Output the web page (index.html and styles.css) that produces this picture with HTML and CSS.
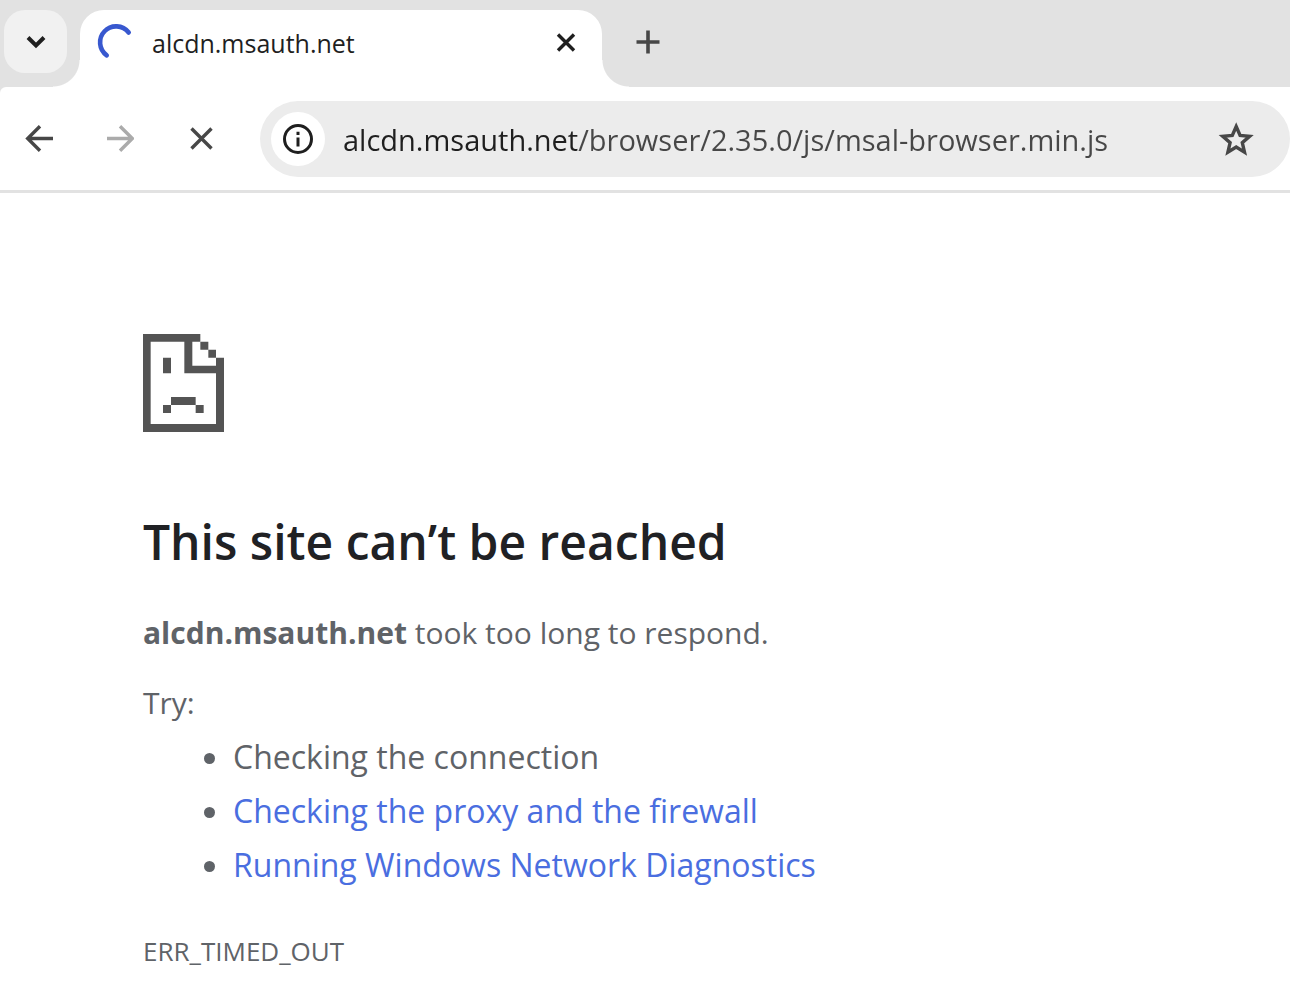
FILE: index.html
```html
<!DOCTYPE html>
<html lang="en">
  <head>
    <meta charset="UTF-8" />
    <meta name="viewport" content="width=device-width, initial-scale=1.0" />
    <title>alcdn.msauth.net</title>

    <link rel="stylesheet" href="styles.css">
  </head>
  <body>
    <header class="browser">
      <div class="tab-strip">
        <button class="tab-search" type="button" aria-label="Search tabs">
          <svg width="20" height="14" viewBox="0 0 20 14">
            <path d="M2 2.5 L10 10.5 L18 2.5" fill="none" stroke="#1f1f1f" stroke-width="4" />
          </svg>
        </button>
        <div class="tab">
          <svg class="spinner" width="36" height="36" viewBox="0 0 36 36">
            <path d="M32.7 7.5 A16 16 0 1 0 10.7 30.3" fill="none" stroke="#3858cf" stroke-width="4.6" stroke-linecap="round" />
          </svg>
          <span class="tab-title">alcdn.msauth.net</span>
          <button class="tab-close" type="button" aria-label="Close tab">
            <svg width="20" height="20" viewBox="0 0 20 20">
              <path d="M2 1.5 L18 17.5 M18 1.5 L2 17.5" stroke="#1f1f1f" stroke-width="3.4" />
            </svg>
          </button>
        </div>
        <button class="new-tab" type="button" aria-label="New tab">
          <svg width="24" height="24" viewBox="0 0 24 24">
            <path d="M12 .5 V23.5 M.5 12 H23.5" stroke="#474747" stroke-width="3.6" />
          </svg>
        </button>
      </div>

      <div class="toolbar">
        <nav class="nav-buttons">
          <button type="button" aria-label="Back">
            <svg width="28" height="28" viewBox="0 0 28 28">
              <path d="M28 13.5 H3 M15 1.2 L2.7 13.5 L15 25.8" fill="none" stroke="#474747" stroke-width="3.4" />
            </svg>
          </button>
          <button type="button" aria-label="Forward" disabled>
            <svg width="28" height="28" viewBox="0 0 28 28">
              <path d="M1 13.5 H26 M14 1.2 L26.3 13.5 L14 25.8" fill="none" stroke="#ababab" stroke-width="3.4" />
            </svg>
          </button>
          <button type="button" aria-label="Stop loading">
            <svg width="28" height="28" viewBox="0 0 28 28">
              <path d="M4.5 3.5 L24.5 23.5 M24.5 3.5 L4.5 23.5" stroke="#474747" stroke-width="3.4" />
            </svg>
          </button>
        </nav>
        <div class="omnibox">
          <button class="site-info" type="button" aria-label="View site information">
            <svg width="32" height="32" viewBox="0 0 32 32">
              <circle cx="16" cy="16" r="13.5" fill="none" stroke="#1f1f1f" stroke-width="3" />
              <path d="M16 14.5 V23.5 M16 8.8 V12" stroke="#1f1f1f" stroke-width="3" />
            </svg>
          </button>
          <input class="url" type="text" aria-label="Address" value="alcdn.msauth.net/browser/2.35.0/js/msal-browser.min.js" />
          <button class="bookmark" type="button" aria-label="Bookmark this page">
            <svg width="36" height="36" viewBox="0 0 36 36">
              <path d="M18.2 5.5 L22.1 14.5 L31.6 15.3 L24.3 21.6 L26.5 31.1 L18.2 26 L9.9 31.1 L12.1 21.6 L4.8 15.3 L14.3 14.5 Z" fill="none" stroke="#474747" stroke-width="3.4" />
            </svg>
          </button>
        </div>
      </div>
    </header>

    <main class="error-page">
      <svg class="sad-page" width="81" height="98" viewBox="0 0 243 294" fill="#545454">
        <!-- outline -->
        <path d="M0 0 H172 V23 H148 V95 H219 V71 H243 V294 H0 Z M23 23 V270 H219 V118 H124 V23 Z" fill-rule="evenodd" />
        <!-- folded corner -->
        <path d="M172 23 H196 V47 H172 Z M196 47 H219 V71 H196 Z" />
        <!-- face -->
        <path d="M60 71 H84 V118 H60 Z M84 189 H158 V213 H84 Z M60 213 H84 V237 H60 Z M158 213 H182 V237 H158 Z" />
      </svg>
      <h1>This site can’t be reached</h1>
      <p class="summary"><strong>alcdn.msauth.net</strong> took too long to respond.</p>
      <p class="try">Try:</p>
      <ul class="suggestions">
        <li>Checking the connection</li>
        <li><a href="#proxy">Checking the proxy and the firewall</a></li>
        <li><a href="#diagnostics">Running Windows Network Diagnostics</a></li>
      </ul>
      <p class="error-code">ERR_TIMED_OUT</p>
    </main>
  </body>
</html>
```

FILE: styles.css
```css
* {
  box-sizing: border-box;
}

body {
  margin: 0;
  background: #fff;
  color: #5f6368;
  font-family: 'Segoe UI', 'Open Sans', 'Noto Sans', sans-serif;
}

button {
  display: flex;
  align-items: center;
  justify-content: center;
  padding: 0;
  background: none;
  border: 0;
}

.browser {
  background: #e2e2e2;
}

/* Tab strip */
.tab-strip {
  display: flex;
  height: 87px;
  padding: 10px 4px 0;
}

.tab-search {
  width: 63px;
  height: 63px;
  margin-right: 13px;
  background: #f1f1f1;
  border-radius: 21px;
}

.tab {
  position: relative;
  display: flex;
  align-items: center;
  width: 522px;
  padding: 0 23px 12px 16px;
  background: #fff;
  border-radius: 24px 24px 0 0;
}

/* Flared bottom corners of the tab */
.tab::before,
.tab::after {
  content: '';
  position: absolute;
  bottom: 0;
  width: 27px;
  height: 27px;
}
.tab::before {
  right: 100%;
  background: radial-gradient(circle at 0 0, transparent 26px, #fff 27px);
}
.tab::after {
  left: 100%;
  background: radial-gradient(circle at 100% 0, transparent 26px, #fff 27px);
}

.spinner {
  overflow: visible;
}

.tab-title {
  flex: 1;
  margin-left: 20px;
  color: #1f1f1f;
  font-size: 25px;
}

.tab-close {
  width: 26px;
  height: 26px;
}

.new-tab {
  width: 64px;
  height: 64px;
  margin-left: 14px;
}

/* Toolbar */
.toolbar {
  display: flex;
  align-items: center;
  padding: 14px 0 13px;
  background: #fff;
  border-bottom: 3px solid #e2e2e2;
  border-top-left-radius: 6px;
}

.nav-buttons {
  display: flex;
  gap: 53px;
  padding: 0 45px 0 25px;
}

.omnibox {
  display: flex;
  flex: 1;
  align-items: center;
  height: 76px;
  padding: 0 36px 0 11px;
  background: #ececec;
  border-radius: 38px;
}

.site-info {
  width: 54px;
  height: 54px;
  background: #fff;
  border-radius: 50%;
}

/* The host is darker than the rest of the address */
.url {
  flex: 1;
  min-width: 0;
  margin: 0 18px;
  padding: 0;
  background: linear-gradient(to right, #1f1f1f 236px, #474747 236px);
  background-clip: text;
  border: 0;
  color: transparent;
  font-family: inherit;
  font-size: 29px;
}

/* Error page */
.error-page {
  padding: 141px 143px 0;
  font-size: 32px;
  line-height: 54px;
}

.sad-page {
  display: block;
}

h1 {
  margin: 74px 0 0;
  color: #202124;
  font-size: 48px;
  font-weight: 600;
  line-height: 72px;
}

p {
  margin: 0;
  font-size: 30px;
}

.summary {
  margin-top: 28px;
}

.try {
  margin-top: 16px;
}

.suggestions {
  margin: 0;
  padding-left: 90px;
}

.suggestions a {
  color: #4a6ee0;
  text-decoration: none;
}

.error-code {
  margin-top: 32px;
  font-size: 26px;
}
```
